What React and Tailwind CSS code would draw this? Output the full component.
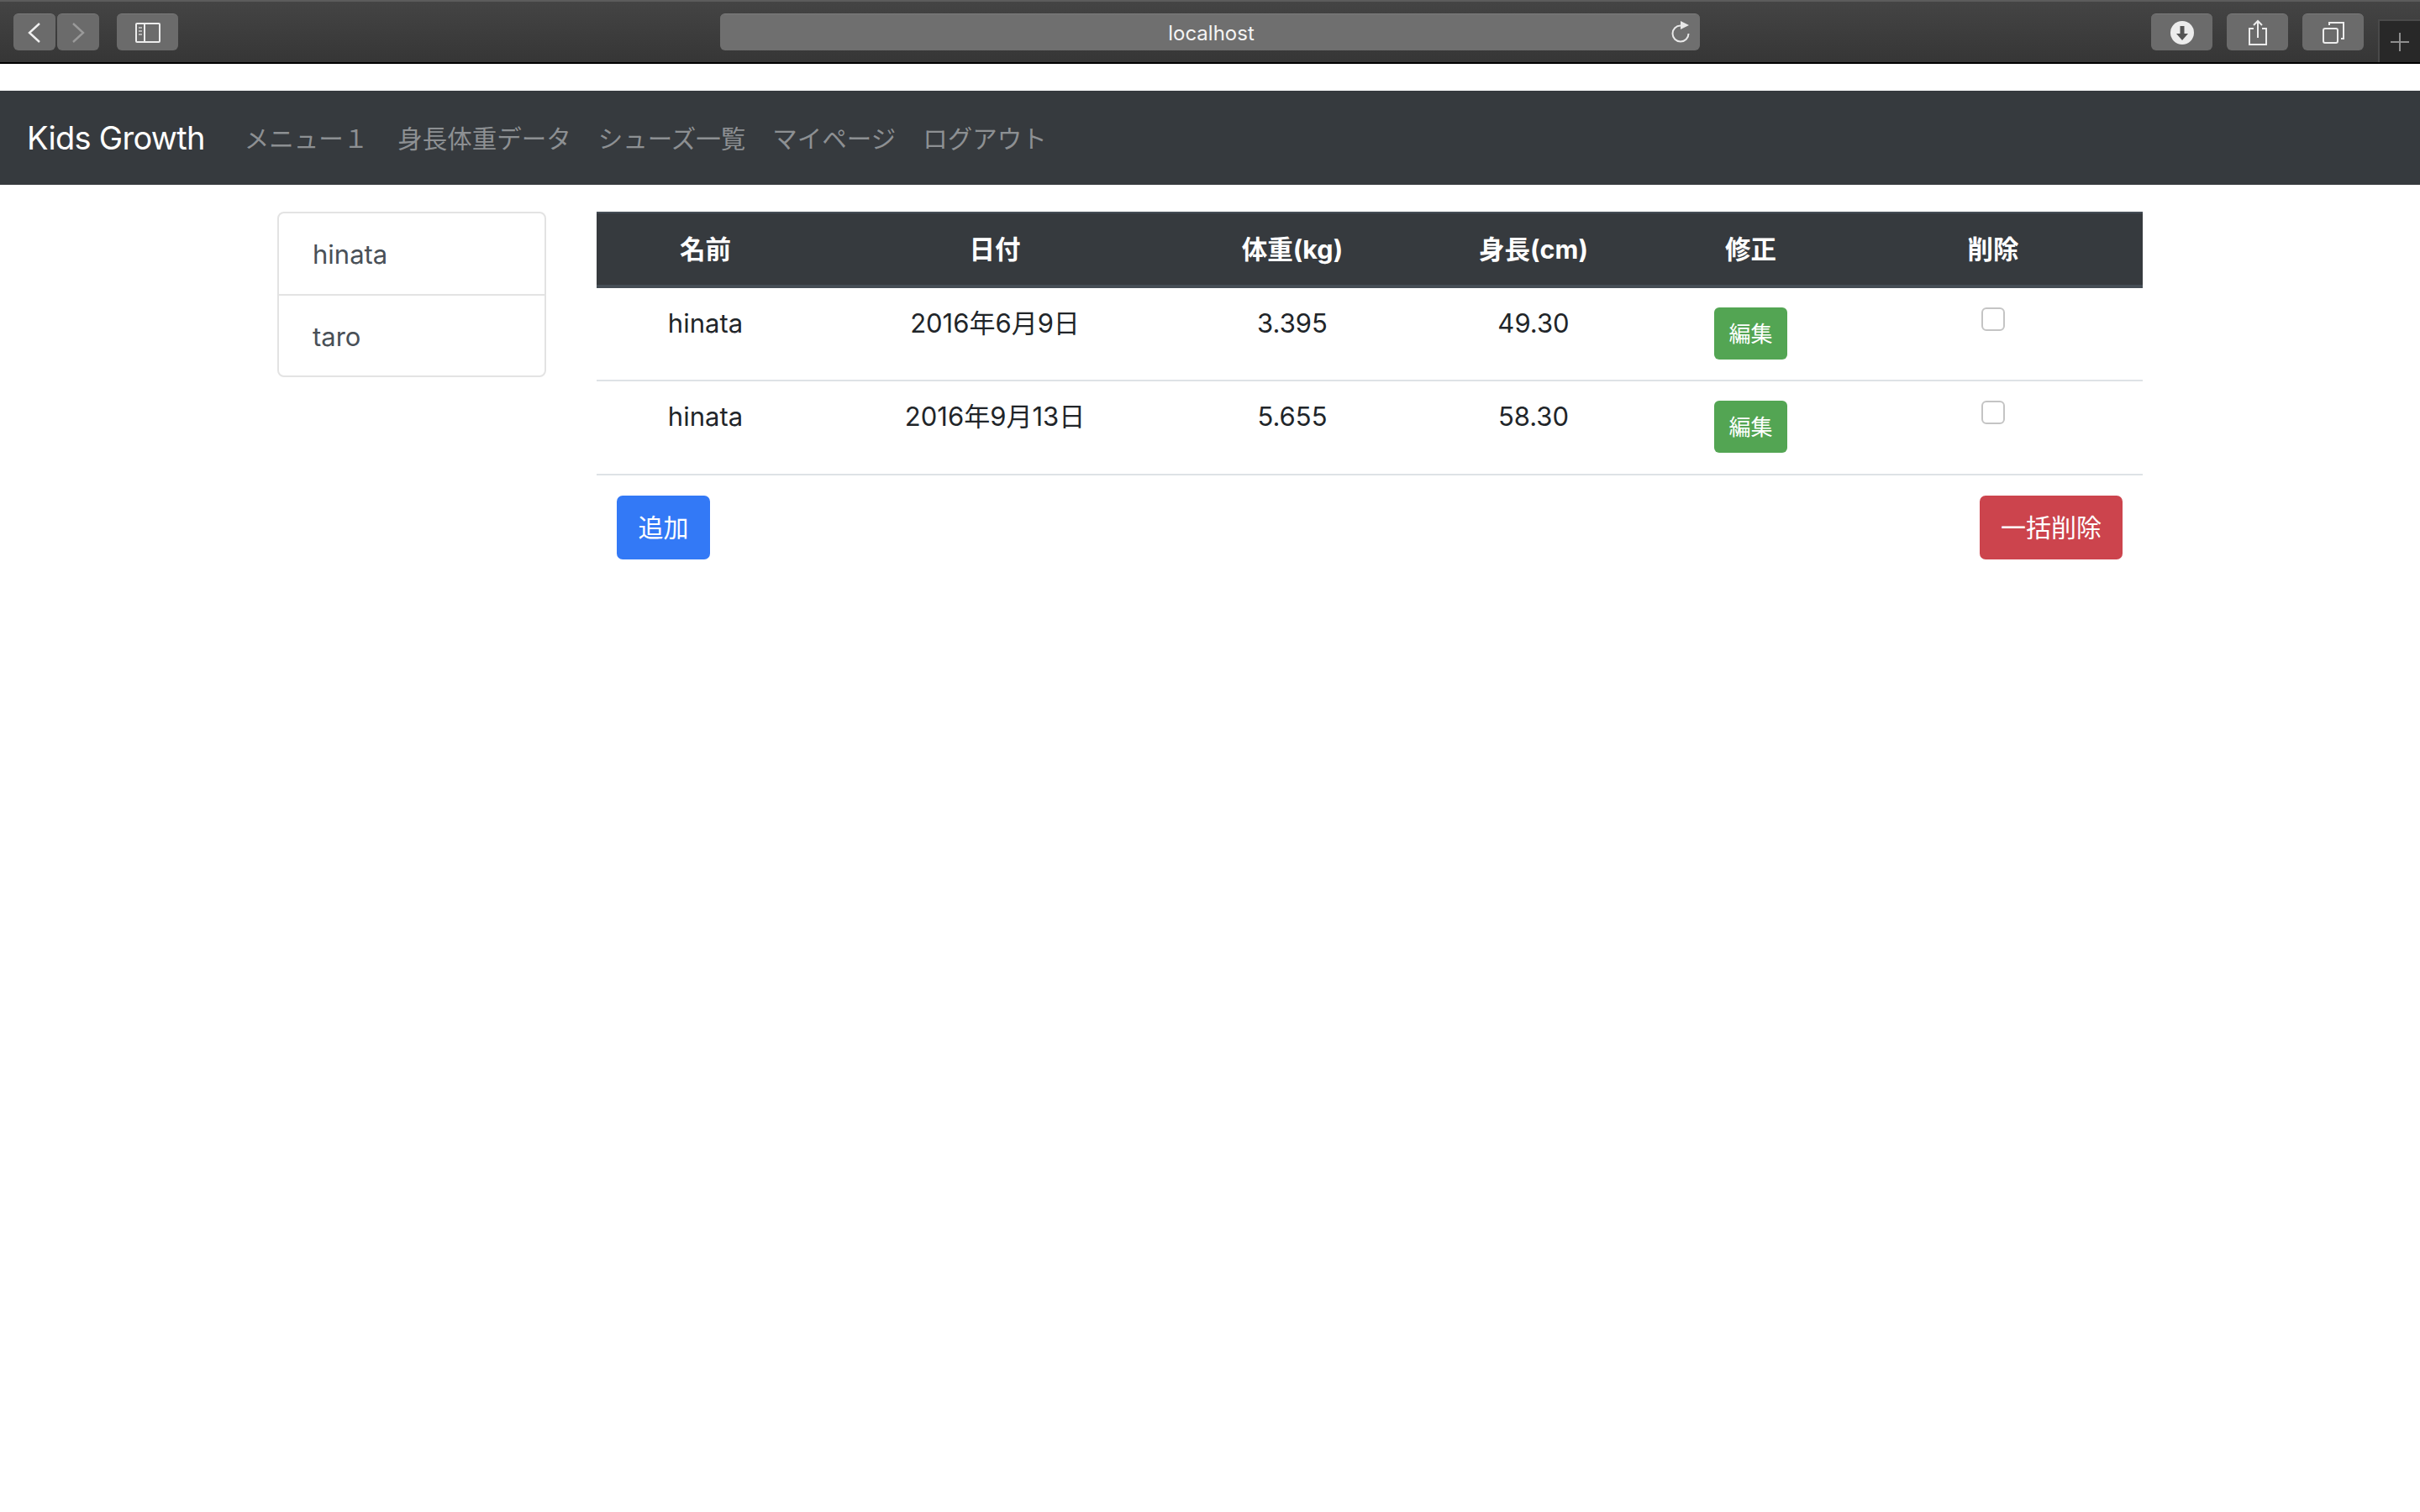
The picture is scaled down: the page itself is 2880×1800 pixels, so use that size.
const Tool = ({ className = "", children }) => (
  <div className={`flex items-center justify-center h-[44px] rounded-[6px] bg-[#6b6b6b] border-t border-[#7a7a7a] ${className}`}>{children}</div>
);

const rows = [
  ["hinata", "2016年6月9日", "3.395", "49.30"],
  ["hinata", "2016年9月13日", "5.655", "58.30"],
];
const widths = ["w-[259px]", "w-[430px]", "w-[278px]", "w-[296px]", "w-[221px]", "w-[356px]"];
const heads = ["名前", "日付", "体重(kg)", "身長(cm)", "修正", "削除"];
const navs = ["メニュー１", "身長体重データ", "シューズ一覧", "マイページ", "ログアウト"];

export default function App() {
  return (
    <div className="min-h-screen bg-white font-['Inter','Noto_Sans_CJK_JP',sans-serif] text-[31px] text-[#212529]">
      {/* browser toolbar */}
      <div className="relative flex h-[76px] items-start border-t-2 border-b-2 border-t-[#5c5c5c] border-b-black bg-gradient-to-b from-[#444444] to-[#363636] pt-[14px] pl-[16px]">
        <Tool className="w-[50px]">
          <svg width="16" height="24" viewBox="0 0 16 24" fill="none" stroke="#f0f0f0" strokeWidth="2.4"><path d="M14 1 2 12l12 11" /></svg>
        </Tool>
        <Tool className="ml-[2px] w-[50px]">
          <svg width="16" height="24" viewBox="0 0 16 24" fill="none" stroke="#9a9a9a" strokeWidth="2.4"><path d="M2 1l12 11L2 23" /></svg>
        </Tool>
        <Tool className="ml-[21px] w-[73px]">
          <svg width="30" height="24" viewBox="0 0 30 24" fill="none" stroke="#ececec" strokeWidth="2"><rect x="1" y="1" width="28" height="22" rx="1" /><path d="M11 1v22" /><path d="M4 6h4M4 10h4M4 14h4" stroke="#b5b5b5" /></svg>
        </Tool>
        <div className="relative ml-[645px] flex h-[44px] w-[1166px] items-center justify-center rounded-[6px] bg-[#6f6f6f] border-t border-[#7c7c7c] pl-[3px] pt-[2px]">
          <span className="text-[24px] text-[#f4f4f4]">localhost</span>
          <svg className="absolute right-[11px] top-[8px]" width="23" height="26" viewBox="0 0 23 26" fill="none" stroke="#e8e8e8" strokeWidth="2"><path d="M11 5.5a9.5 9.5 0 1 0 9.5 9.5" /><path d="M11 0l10 5-10 5z" fill="#e8e8e8" stroke="none" /></svg>
        </div>
        <Tool className="ml-[537px] w-[73px]">
          <svg width="28" height="28" viewBox="0 0 28 28"><circle cx="14" cy="14" r="14" fill="#ececec" /><path d="M11.5 6h5v9h4.5L14 23l-7-8h4.5z" fill="#555555" /></svg>
        </Tool>
        <Tool className="ml-[17px] w-[73px]">
          <svg width="24" height="32" viewBox="0 0 24 32" fill="none" stroke="#ececec" strokeWidth="2"><path d="M7 11H2v19h20V11h-5M12 22V2M7 7l5-5 5 5" /></svg>
        </Tool>
        <Tool className="ml-[17px] w-[73px]">
          <svg width="26" height="26" viewBox="0 0 26 26" fill="none" stroke="#ececec" strokeWidth="2"><rect x="1" y="8" width="17" height="17" rx="2" /><path d="M8 4V1h17v19h-3" /></svg>
        </Tool>
        <div className="absolute right-0 bottom-0 flex h-[51px] w-[50px] items-center justify-center border-l-2 border-t-2 border-[#4a4a4a] bg-[#282828]">
          <svg width="24" height="24" viewBox="0 0 24 24" stroke="#8e8e8e" strokeWidth="2"><path d="M12 1v22M1 12h22" /></svg>
        </div>
      </div>

      {/* navbar */}
      <div className="mt-[32px] flex h-[112px] items-center bg-[#363a3e] pl-[32px]">
        <span className="text-[38px] tracking-[-0.7px] text-white">Kids Growth</span>
        <div className="ml-[47px] flex gap-[32px] pt-[2px]">
          {navs.map((n) => (
            <span key={n} className="text-[29.5px] text-[#8d9093] first:mr-[3px]">{n}</span>
          ))}
        </div>
      </div>

      {/* content */}
      <div className="flex items-start pt-[32px] pl-[330px]">
        <div className="w-[320px] overflow-hidden rounded-[8px] border-2 border-[#e3e3e3] text-[#495057]">
          <div className="flex h-[98px] items-center px-[40px] pt-[3px] border-b-2 border-[#e3e3e3]">hinata</div>
          <div className="flex h-[95px] items-center px-[40px] pt-[3px]">taro</div>
        </div>

        <div className="ml-[60px] w-[1840px]">
          <table className="w-full table-fixed border-collapse text-center">
            <thead>
              <tr className="h-[88px] bg-[#363a3e] text-white border-t-2 border-b-4 border-[#454d55]">
                {heads.map((h, i) => (
                  <th key={h} className={`${widths[i]} font-bold text-[30.5px]`}>{h}</th>
                ))}
              </tr>
            </thead>
            <tbody>
              {rows.map((r, ri) => (
                <tr key={ri} className="h-[112px] border-b-2 border-[#dee2e6] align-top">
                  {r.map((c, i) => (
                    <td key={i} className="pt-[19px]">{c}</td>
                  ))}
                  <td className="pt-[23px]">
                    <button className="h-[62px] w-[87px] rounded-[6px] bg-[#53a553] text-[26px] text-white">編集</button>
                  </td>
                  <td className="pt-[23px]">
                    <div className="mx-auto h-[28px] w-[28px] rounded-[6px] border-2 border-[#c4c4c4] bg-white" />
                  </td>
                </tr>
              ))}
            </tbody>
          </table>
          <div className="flex justify-between px-[24px] pt-[24px]">
            <button className="h-[76px] w-[111px] rounded-[7px] bg-[#3379f6] text-[30px] text-white">追加</button>
            <button className="h-[76px] w-[170px] rounded-[7px] bg-[#cc444d] text-[30px] text-white">一括削除</button>
          </div>
        </div>
      </div>
    </div>
  );
}
